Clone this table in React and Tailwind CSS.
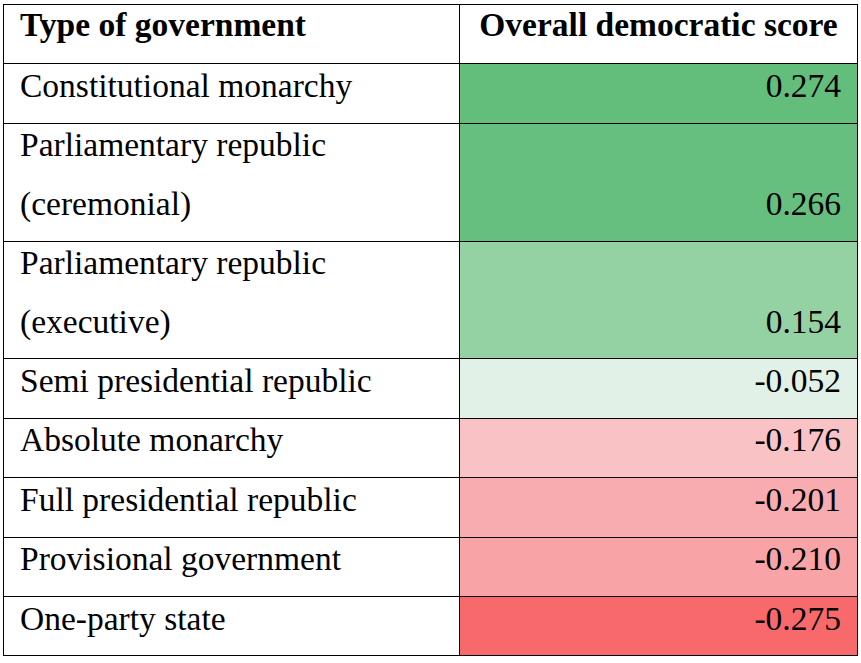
import React from 'react';

const ROWS = [
  { type: 'Constitutional monarchy', score: '0.274', bg: 'bg-[#63be7b]' },
  { type: 'Parliamentary republic (ceremonial)', score: '0.266', bg: 'bg-[#66bf7e]' },
  { type: 'Parliamentary republic (executive)', score: '0.154', bg: 'bg-[#94d2a4]' },
  { type: 'Semi presidential republic', score: '-0.052', bg: 'bg-[#e2f1e8]' },
  { type: 'Absolute monarchy', score: '-0.176', bg: 'bg-[#f9c3c6]' },
  { type: 'Full presidential republic', score: '-0.201', bg: 'bg-[#f8acaf]' },
  { type: 'Provisional government', score: '-0.210', bg: 'bg-[#f8a3a6]' },
  { type: 'One-party state', score: '-0.275', bg: 'bg-[#f8696b]' },
];

export default function App() {
  return (
    <div className="bg-white min-h-screen pt-[4px] pl-[3px] text-black">
      <div className="w-[855px] grid grid-cols-[456px_1fr] border-t border-l border-black font-['Liberation_Serif','Times_New_Roman',serif] text-[33.5px]">
        {/* Header */}
        <div className="border-r border-b border-black pl-4 pr-2 font-bold">
          <div className="leading-[58.4px] -mt-[9px] pb-[9px]">Type of government</div>
        </div>
        <div className="border-r border-b border-black px-4 font-bold text-center">
          <div className="leading-[58.4px] -mt-[9px] pb-[9px]">Overall democratic score</div>
        </div>

        {ROWS.map((r) => (
          <React.Fragment key={r.type}>
            <div className="border-r border-b border-black pl-4 pr-2">
              <div className="leading-[58.4px] -mt-[7.5px] pb-[7.5px]">{r.type}</div>
            </div>
            <div className={`border-r border-b border-black px-4 flex flex-col justify-end text-right ${r.bg}`}>
              <div className="leading-[58.4px] -mt-[7.5px] pb-[7.5px]">{r.score}</div>
            </div>
          </React.Fragment>
        ))}
      </div>
    </div>
  );
}
